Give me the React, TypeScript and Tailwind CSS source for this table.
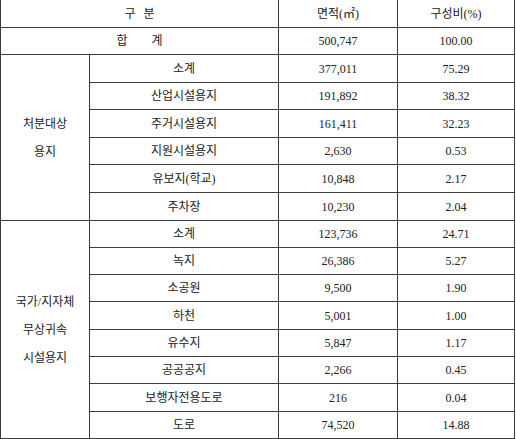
import { Fragment } from "react";

const rows1 = [
  ["소계", "377,011", "75.29"],
  ["산업시설용지", "191,892", "38.32"],
  ["주거시설용지", "161,411", "32.23"],
  ["지원시설용지", "2,630", "0.53"],
  ["유보지(학교)", "10,848", "2.17"],
  ["주차장", "10,230", "2.04"],
];

const rows2 = [
  ["소계", "123,736", "24.71"],
  ["녹지", "26,386", "5.27"],
  ["소공원", "9,500", "1.90"],
  ["하천", "5,001", "1.00"],
  ["유수지", "5,847", "1.17"],
  ["공공공지", "2,266", "0.45"],
  ["보행자전용도로", "216", "0.04"],
  ["도로", "74,520", "14.88"],
];

function Cell({ children, className = "" }: { children?: React.ReactNode; className?: string }) {
  return <div className={"bg-white flex items-center justify-center " + className}>{children}</div>;
}

export default function App() {
  return (
    <div
      className="w-[516px] h-[439px] bg-white text-[12px] text-[#222]"
      style={{ fontFamily: '"Liberation Serif", "Noto Sans CJK KR", serif' }}
    >
      <div className="grid w-[515px] grid-cols-[88px_188px_118px_116px] grid-rows-[27px_26px_27px_26px_27px_26px_27px_27px_26px_26px_26px_27px_26px_26px_27px_26px] gap-px bg-[#3c3c3c] px-px pb-px">
        <Cell className="col-span-2 gap-2">
          <span>구</span>
          <span>분</span>
        </Cell>
        <Cell>면적(㎡)</Cell>
        <Cell>구성비(%)</Cell>

        <Cell className="col-span-2 gap-6">
          <span>합</span>
          <span>계</span>
        </Cell>
        <Cell>500,747</Cell>
        <Cell>100.00</Cell>

        <Cell className="row-span-6 flex-col leading-[28px]">
          <span>처분대상</span>
          <span>용지</span>
        </Cell>
        {rows1.map((r) => (
          <Fragment key={"a" + r[0]}>
            <Cell>{r[0]}</Cell>
            <Cell>{r[1]}</Cell>
            <Cell>{r[2]}</Cell>
          </Fragment>
        ))}

        <Cell className="row-span-8 flex-col leading-[28px]">
          <span>국가/지자체</span>
          <span>무상귀속</span>
          <span>시설용지</span>
        </Cell>
        {rows2.map((r) => (
          <Fragment key={"b" + r[0]}>
            <Cell>{r[0]}</Cell>
            <Cell>{r[1]}</Cell>
            <Cell>{r[2]}</Cell>
          </Fragment>
        ))}
      </div>
    </div>
  );
}
